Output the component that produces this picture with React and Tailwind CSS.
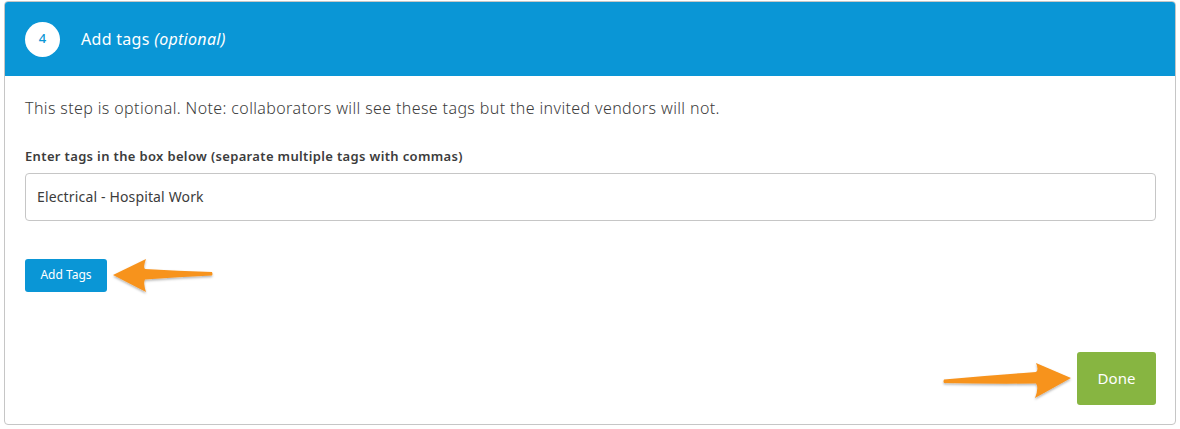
import React from "react"

const LeftArrow = () => (
  <svg className="absolute left-[108px] top-[254px]" width="110" height="44" viewBox="0 0 110 44">
    <defs>
      <filter id="sh1" x="-20%" y="-20%" width="140%" height="160%">
        <feDropShadow dx="0" dy="1.5" stdDeviation="1.2" floodColor="#000" floodOpacity="0.3" />
      </filter>
    </defs>
    <path
      d="M5 21 L38 5 Q35 13 37 15 Q70 17 104 18 Q105 20 104 21.5 Q70 23 37 25.5 Q35 29 38 38 Z"
      fill="#f7931e"
      filter="url(#sh1)"
    />
  </svg>
)

const RightArrow = () => (
  <svg className="absolute left-[938px] top-[358px]" width="140" height="46" viewBox="0 0 140 46">
    <defs>
      <filter id="sh2" x="-20%" y="-20%" width="140%" height="160%">
        <feDropShadow dx="0" dy="1.5" stdDeviation="1.2" floodColor="#000" floodOpacity="0.3" />
      </filter>
    </defs>
    <path
      d="M133 20 L98 5 Q101 12 98 14 Q55 17 6 21.5 Q5 23.5 6 25 Q55 26 98 25.5 Q101 30 97 40 Z"
      fill="#f7931e"
      filter="url(#sh2)"
    />
  </svg>
)

const App = () => {
  return (
    <div className="relative h-[429px] w-[1180px] bg-white pl-[4px] pt-[1px] font-['Noto_Sans',sans-serif]">
      <div className="flex h-[424px] w-[1172px] flex-col overflow-hidden rounded-[4px] border border-[#c6c6c6]">
        <div className="flex h-[74px] shrink-0 items-center bg-[#0a96d6] pl-[20px]">
          <div className="flex h-[35px] w-[35px] items-center justify-center rounded-full bg-white text-[13px] font-medium text-[#0a96d6]">
            4
          </div>
          <h2 className="ml-[21px] text-[16px] tracking-[0.3px] text-white">
            Add tags <span className="italic">(optional)</span>
          </h2>
        </div>
        <div className="flex flex-1 flex-col pl-[20px] pr-[19px]">
          <p className="mt-[20px] text-[16px] font-light tracking-[0.38px] text-[#3c3c3c]">
            This step is optional. Note: collaborators will see these tags but the invited vendors will not.
          </p>
          <label className="mt-[27px] text-[13px] font-semibold tracking-[0.35px] text-[#3c3c3c]">
            Enter tags in the box below (separate multiple tags with commas)
          </label>
          <div className="mt-[6px] flex h-[48px] items-center rounded-[4px] border border-[#c6c6c6] px-[11px] text-[14px] tracking-[0.15px] text-[#3c3c3c]">
            Electrical - Hospital Work
          </div>
          <div className="mt-[38px]">
            <button className="h-[33px] w-[82px] rounded-[3px] bg-[#0a96d6] text-[12px] text-white">
              Add Tags
            </button>
          </div>
          <div className="mt-auto mb-[19px] flex justify-end">
            <button className="h-[53px] w-[79px] rounded-[3px] bg-[#87b541] text-[15px] text-white">
              Done
            </button>
          </div>
        </div>
      </div>
      <LeftArrow />
      <RightArrow />
    </div>
  )
}

export default App
